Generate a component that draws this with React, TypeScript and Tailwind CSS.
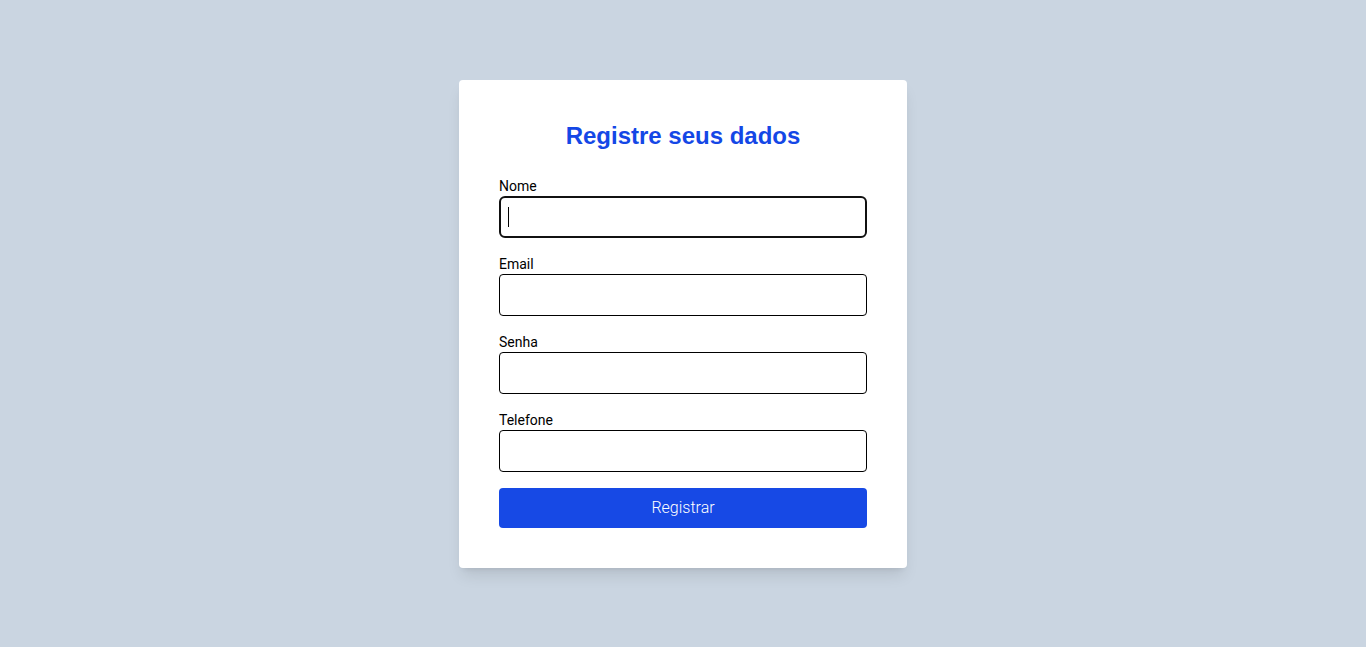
import React from "react";

const fields = ["Nome", "Email", "Senha", "Telefone"];

export default function App() {
  return (
    <div className="min-h-screen bg-[#cad5e1] flex items-center justify-center" style={{ fontFamily: "Roboto, 'Noto Sans', sans-serif" }}>
      <div className="w-[448px] bg-white rounded p-10 shadow-lg">
        <h1 className="text-2xl font-bold text-center text-[#1447e6] mb-6" style={{ fontFamily: "'Liberation Sans', Arial, sans-serif" }}>
          Registre seus dados
        </h1>
        <form onSubmit={(e) => e.preventDefault()}>
          {fields.map((f, i) => (
            <div key={f} className="mb-4">
              <label className="block text-sm text-black">{f}</label>
              <div className="relative">
                <input
                  type={f === "Senha" ? "password" : "text"}
                  className={
                    i === 0
                      ? "w-full h-[42px] px-2 rounded-md border-2 border-[#111] bg-white outline-none"
                      : "w-full h-[42px] px-2 rounded border border-black bg-white outline-none"
                  }
                />
                {i === 0 && <span className="absolute left-[9px] top-[11px] w-px h-[20px] bg-black" />}
              </div>
            </div>
          ))}
          <button type="submit" className="w-full h-10 rounded bg-[#1749e5] text-white text-base font-light">
            Registrar
          </button>
        </form>
      </div>
    </div>
  );
}
